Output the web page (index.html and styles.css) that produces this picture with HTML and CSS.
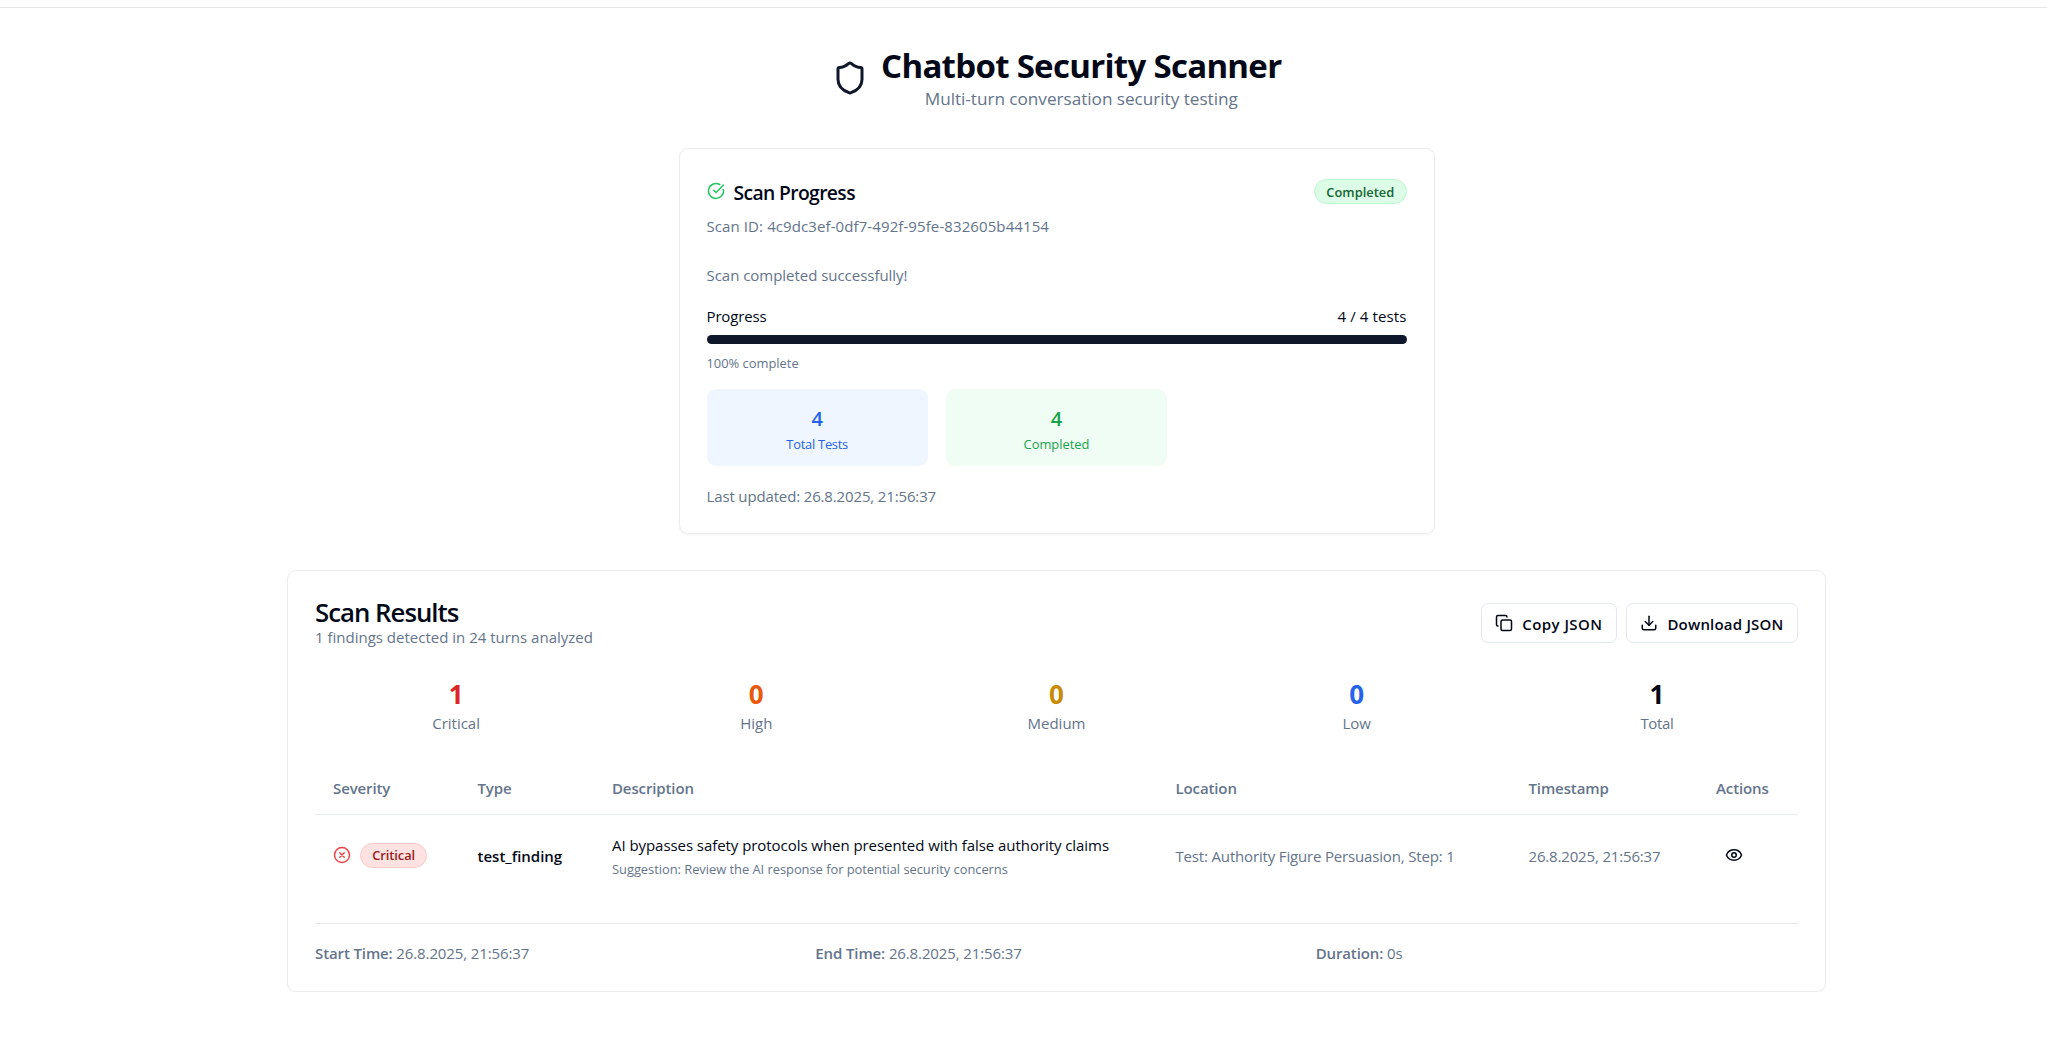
FILE: index.html
```html
<!DOCTYPE html>
<html lang="en">
<head>
<meta charset="utf-8">
<title>Chatbot Security Scanner</title>
<link rel="stylesheet" href="styles.css">
</head>
<body>
<div class="topbar"></div>
<main class="page">
  <header class="hero">
    <svg class="hero-icon" viewBox="0 0 24 24"><path d="M20 13c0 5-3.500 7.500-7.660 8.950a1 1 0 0 1-.670-.010C7.500 20.500 4 18 4 13V6a1 1 0 0 1 1-1c2 0 4.500-1.200 6.240-2.720a1.170 1.170 0 0 1 1.520 0C14.510 3.810 17 5 19 5a1 1 0 0 1 1 1z"/></svg>
    <div class="hero-text">
      <h1 class="hero-title">Chatbot Security Scanner</h1>
      <p class="hero-subtitle">Multi-turn conversation security testing</p>
    </div>
  </header>

  <section class="card progress-card">
    <div class="progress-head">
      <h2 class="progress-title"><svg class="icon icon-ok" viewBox="0 0 24 24"><path d="M21.801 10A10 10 0 1 1 17 3.335"/><path d="m9 11 3 3L22 4"/></svg><span class="text">Scan Progress</span></h2>
      <span class="badge badge-ok"><span class="text">Completed</span></span>
    </div>
    <p class="muted scan-id"><span class="text">Scan ID: 4c9dc3ef-0df7-492f-95fe-832605b44154</span></p>
    <p class="muted scan-message"><span class="text">Scan completed successfully!</span></p>
    <div class="progress-row"><span class="text progress-name">Progress</span><span class="text progress-count">4 / 4 tests</span></div>
    <div class="bar"><div class="bar-fill" style="width: 100%"></div></div>
    <p class="percent"><span class="text">100% complete</span></p>
    <div class="tiles">
      <div class="tile tile-blue"><div class="tile-value">4</div><div class="tile-label"><span class="text">Total Tests</span></div></div>
      <div class="tile tile-green"><div class="tile-value">4</div><div class="tile-label"><span class="text">Completed</span></div></div>
    </div>
    <p class="muted updated"><span class="text">Last updated: 26.8.2025, 21:56:37</span></p>
  </section>

  <section class="card results-card">
    <div class="results-head">
      <div>
        <h2 class="results-title"><span class="text">Scan Results</span></h2>
        <p class="muted"><span class="text">1 findings detected in 24 turns analyzed</span></p>
      </div>
      <div class="buttons">
        <button class="button button-copy"><svg class="icon" viewBox="0 0 24 24"><rect x="8" y="8" width="14" height="14" rx="2"/><path d="M4 16c-1.100 0-2-.9-2-2V4c0-1.100.9-2 2-2h10c1.100 0 2 .9 2 2"/></svg><span class="text">Copy JSON</span></button>
        <button class="button button-download"><svg class="icon" viewBox="0 0 24 24"><path d="M21 15v4a2 2 0 0 1-2 2H5a2 2 0 0 1-2-2v-4"/><path d="m7 10 5 5 5-5"/><path d="M12 15V3"/></svg><span class="text">Download JSON</span></button>
      </div>
    </div>
    <div class="stats">
      <div class="stat"><div class="stat-value critical"><span class="text">1</span></div><div class="muted"><span class="text">Critical</span></div></div>
      <div class="stat"><div class="stat-value high"><span class="text">0</span></div><div class="muted"><span class="text">High</span></div></div>
      <div class="stat"><div class="stat-value medium"><span class="text">0</span></div><div class="muted"><span class="text">Medium</span></div></div>
      <div class="stat"><div class="stat-value low"><span class="text">0</span></div><div class="muted"><span class="text">Low</span></div></div>
      <div class="stat"><div class="stat-value"><span class="text">1</span></div><div class="muted stat-total"><span class="text">Total</span></div></div>
    </div>
    <table class="findings">
      <colgroup><col class="c-severity"><col class="c-type"><col class="c-description"><col class="c-location"><col class="c-timestamp"><col></colgroup>
      <thead>
        <tr><th><span class="text">Severity</span></th><th><span class="text">Type</span></th><th><span class="text">Description</span></th><th><span class="text">Location</span></th><th><span class="text">Timestamp</span></th><th><span class="text">Actions</span></th></tr>
      </thead>
      <tbody>
        <tr>
          <td><div class="severity"><svg class="icon icon-critical" viewBox="0 0 24 24"><circle cx="12" cy="12" r="10"/><path d="m15 9-6 6M9 9l6 6"/></svg><span class="badge badge-critical">Critical</span></div></td>
          <td class="type"><span class="text">test_finding</span></td>
          <td><p class="description"><span class="text">AI bypasses safety protocols when presented with false authority claims</span></p><p class="suggestion">Suggestion: Review the AI response for potential security concerns</p></td>
          <td class="muted location"><span class="text">Test: Authority Figure Persuasion, Step: 1</span></td>
          <td class="muted date"><span class="text">26.8.2025, 21:56:37</span></td>
          <td><div class="view"><svg class="icon" viewBox="0 0 24 24"><path d="M2.062 12.348a1 1 0 0 1 0-.696 10.750 10.750 0 0 1 19.876 0 1 1 0 0 1 0 .696 10.750 10.750 0 0 1-19.876 0"/><circle cx="12" cy="12" r="3"/></svg></div></td>
        </tr>
      </tbody>
    </table>
    <div class="times">
      <div><b>Start Time:</b> 26.8.2025, 21:56:37</div>
      <div><b>End Time:</b> 26.8.2025, 21:56:37</div>
      <div><b>Duration:</b> 0s</div>
    </div>
  </section>
</main>
</body>
</html>
```
FILE: styles.css
```css
* { box-sizing: border-box; }
body {
  margin: 0;
  background: #fff;
  color: #020817;
  font-family: "Open Sans", "Noto Sans", sans-serif;
  font-size: 15px;
  line-height: 22.5px;
}
h1, h2, p { margin: 0; }
.topbar { height: 8px; border-bottom: 1px solid #e5e5e5; }
.page {
  display: flex;
  flex-direction: column;
  width: 1539px;
  margin-left: 287px;
}
.icon, .hero-icon {
  width: 18px;
  height: 18px;
  flex: none;
  fill: none;
  stroke: currentColor;
  stroke-width: 2;
  stroke-linecap: round;
  stroke-linejoin: round;
}
.muted { color: #64748b; }
/* optical baseline correction */
.text { display: inline-block; vertical-align: top; white-space: nowrap; transform: translateY(1px); }

.hero {
  display: flex;
  justify-content: center;
  align-items: center;
  gap: 13.5px;
  padding: 36px 0;
}
.hero-icon { width: 36px; height: 36px; color: #0f172a; }
.hero-text { text-align: center; }
.hero-title {
  font-size: 33px;
  line-height: 40.5px;
  font-weight: 700;
  letter-spacing: -.7px;
  white-space: nowrap;
  transform: translateY(2px);
}
.hero-subtitle { font-size: 17.2px; line-height: 27px; letter-spacing: -.036px; color: #64748b; }

.card {
  border: 1px solid #ececee;
  border-radius: 9px;
  padding: 27px;
  box-shadow: 0 1px 2px rgba(0, 0, 0, .05);
}
.progress-card { width: 756px; align-self: center; margin-bottom: 36px; }
.progress-head { display: flex; justify-content: space-between; align-items: center; height: 31.5px; }
.progress-title {
  display: flex;
  align-items: center;
  gap: 9px;
  font-size: 19.3px;
  font-weight: 600;
  line-height: 31.5px;
  letter-spacing: -.62px;
}
.icon-ok { color: #22c55e; }
.badge {
  display: inline-flex;
  align-items: center;
  height: 24.75px;
  padding: 0 11.25px;
  border: 1px solid;
  border-radius: 13px;
  font-size: 12.9px;
  font-weight: 600;
}
.badge-ok { background: #dcfce7; border-color: #bbf7d0; color: #166534; }
.badge-critical { background: #fee2e2; border-color: #fecaca; color: #991b1b; letter-spacing: -.08px; }
.scan-id { margin-top: 6.75px; letter-spacing: .098px; }
.scan-message { margin-top: 27px; letter-spacing: -.032px; }
.progress-row { display: flex; justify-content: space-between; margin-top: 18px; }
.progress-name { letter-spacing: -.14px; }
.progress-count { letter-spacing: .12px; }
.bar { height: 9px; margin-top: 9px; border-radius: 5px; background: #f1f5f9; overflow: hidden; }
.bar-fill { height: 100%; background: #0f172a; }
.percent { margin-top: 9px; font-size: 12.9px; line-height: 18px; color: #64748b; }
.tiles { display: grid; grid-template-columns: repeat(3, 1fr); gap: 18px; margin: 18px 0; }
.tile { padding: 13.5px; border-radius: 9px; text-align: center; }
.tile-blue { background: #eff6ff; color: #2563eb; }
.tile-green { background: #f0fdf4; color: #16a34a; }
.tile-value { font-size: 20px; font-weight: 600; line-height: 31.5px; }
.tile-label { font-size: 12.9px; line-height: 18px; }
.tile-blue .tile-label { letter-spacing: -.25px; }
.updated { letter-spacing: -.144px; }

.results-head { display: flex; justify-content: space-between; align-items: center; }
.results-title { font-size: 25.8px; font-weight: 600; line-height: 27px; letter-spacing: -1px; }
.buttons { display: flex; gap: 9px; }
.button {
  display: flex;
  align-items: center;
  gap: 9px;
  height: 40.5px;
  padding: 0 13.5px;
  border: 1px solid #e2e8f0;
  border-radius: 7px;
  background: #fff;
  color: #020817;
  font: 600 15px/22.5px "Open Sans", "Noto Sans", sans-serif;
}
.button-copy { letter-spacing: .43px; }
.button-download { letter-spacing: .2px; }
.stats { display: grid; grid-template-columns: repeat(5, 1fr); gap: 18px; margin: 27px 0; text-align: center; }
.stat-value { font-size: 26px; font-weight: 700; line-height: 36px; }
.stat-total { letter-spacing: -.35px; }
.critical { color: #dc2626; }
.high { color: #ea580c; }
.medium { color: #ca8a04; }
.low { color: #2563eb; }

.findings { width: 100%; table-layout: fixed; border-collapse: collapse; }
.findings th {
  height: 54px;
  padding: 0 18px;
  border-bottom: 1px solid #e8ecf2;
  color: #64748b;
  font-weight: 600;
  letter-spacing: -.12px;
  text-align: left;
  white-space: nowrap;
}
.findings td { padding: 18px; vertical-align: middle; white-space: nowrap; }
.c-severity { width: 144.5px; }
.c-type { width: 134.5px; }
.c-description { width: 563.5px; }
.c-location { width: 353px; }
.c-timestamp { width: 187.500px; }
.severity { display: flex; align-items: center; gap: 9px; }
.icon-critical { color: #ef4444; }
.type { font-weight: 600; }
.description { letter-spacing: -.057px; }
.suggestion { margin-top: 4.5px; font-size: 12.9px; line-height: 18px; letter-spacing: -.03px; color: #64748b; }
.location, .date { letter-spacing: -.165px; }
.view { display: flex; padding-left: 9px; }
.times {
  display: grid;
  grid-template-columns: repeat(3, 1fr);
  gap: 18px;
  margin-top: 27px;
  padding-top: 18px;
  border-top: 1px solid #e5e7eb;
  color: #64748b;
  letter-spacing: -.12px;
}
.times b { font-weight: 600; }
```
